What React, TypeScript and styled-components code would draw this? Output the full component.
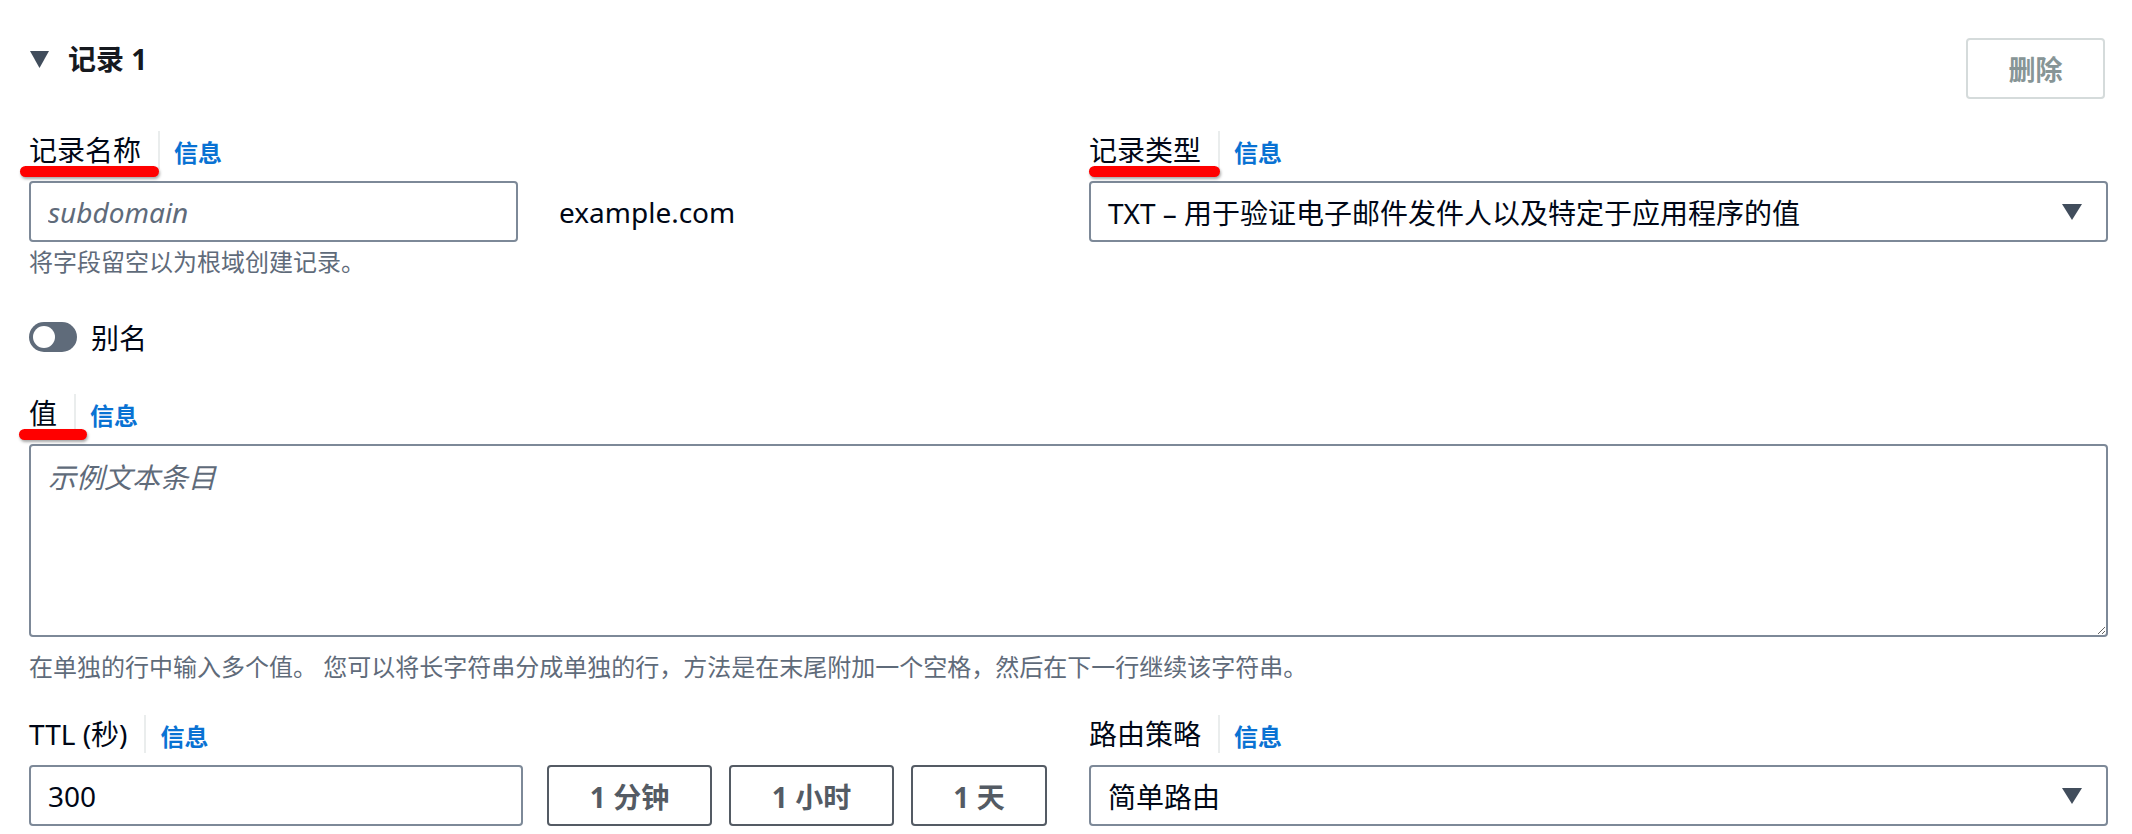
import React from "react";
import styled, { createGlobalStyle } from "styled-components";

const GlobalStyle = createGlobalStyle`
  html, body {
    margin: 0;
    padding: 0;
    background: #ffffff;
  }
  body {
    font-family: "Noto Sans", "Noto Sans CJK SC", sans-serif;
    color: #000716;
  }
  * {
    box-sizing: border-box;
  }
`;

const Page = styled.div`
  padding: 38px 24px 0 29px;
`;

const HeaderRow = styled.div`
  display: flex;
  justify-content: space-between;
  align-items: flex-start;
`;

const Title = styled.h2`
  margin: 0;
  display: flex;
  align-items: center;
  gap: 19px;
  font-size: 28px;
  font-weight: 700;
  line-height: 42px;
  color: #16191f;

  svg {
    margin-left: 1px;
  }
`;

const DeleteButton = styled.button`
  width: 139px;
  height: 61px;
  margin-right: 3px;
  border: 2px solid #d5dbdb;
  border-radius: 4px;
  background: #ffffff;
  color: #879596;
  font-family: inherit;
  font-size: 27px;
  font-weight: 700;
  cursor: default;
`;

const TwoCol = styled.div<{ $top: number }>`
  display: grid;
  grid-template-columns: 1fr 1fr;
  column-gap: 41px;
  margin-top: ${({ $top }) => $top}px;
`;

const Field = styled.div<{ $top?: number }>`
  display: flex;
  flex-direction: column;
  margin-top: ${({ $top }) => $top || 0}px;
`;

const LabelRow = styled.div`
  position: relative;
  display: flex;
  align-items: center;
  height: 40px;
  margin-bottom: 11px;
`;

const Label = styled.span`
  font-size: 28px;
  line-height: 40px;
  color: #000716;
`;

const Divider = styled.span`
  width: 2px;
  height: 38px;
  background: #eaeded;
  margin: 0 14px 0 17px;
`;

const InfoLink = styled.a`
  font-size: 24px;
  font-weight: 700;
  color: #0972d3;
  text-decoration: none;
  margin-top: 3px;
`;

const RedMark = styled.span<{ $left: number; $width: number }>`
  position: absolute;
  top: 36px;
  left: ${({ $left }) => $left}px;
  width: ${({ $width }) => $width}px;
  height: 11px;
  border-radius: 6px;
  background: #ff0000;
  box-shadow: 1px 2px 3px rgba(0, 0, 0, 0.35);
`;

const ControlRow = styled.div`
  display: flex;
  align-items: center;
`;

const TextInput = styled.input<{ $width: number }>`
  width: ${({ $width }) => $width}px;
  height: 61px;
  border: 2px solid #7d8998;
  border-radius: 4px;
  padding: 0 17px;
  font-family: inherit;
  font-size: 28px;
  color: #000716;
  outline: none;

  &::placeholder {
    font-style: italic;
    color: #5f6b7a;
  }
`;

const Suffix = styled.span`
  margin-left: 41px;
  font-size: 28px;
  color: #000716;
`;

const Help = styled.div<{ $top: number }>`
  margin-top: ${({ $top }) => $top}px;
  font-size: 24px;
  line-height: 32px;
  color: #5f6b7a;
`;

const SelectBox = styled.div`
  display: flex;
  align-items: center;
  justify-content: space-between;
  height: 61px;
  border: 2px solid #7d8998;
  border-radius: 4px;
  padding: 0 24px 0 17px;
  font-size: 28px;
  color: #000716;
  white-space: nowrap;
`;

const ToggleRow = styled.div`
  display: flex;
  align-items: center;
  gap: 14px;
  height: 40px;
  margin-top: 39px;
  font-size: 28px;
`;

const ToggleTrack = styled.span`
  position: relative;
  width: 48px;
  height: 30px;
  border-radius: 15px;
  background: #5f6b7a;
`;

const ToggleKnob = styled.span`
  position: absolute;
  top: 4px;
  left: 4px;
  width: 22px;
  height: 22px;
  border-radius: 50%;
  background: #ffffff;
`;

const TextArea = styled.textarea`
  display: block;
  width: 100%;
  height: 193px;
  border: 2px solid #7d8998;
  border-radius: 4px;
  padding: 11px 17px;
  font-family: inherit;
  font-size: 28px;
  line-height: 40px;
  color: #000716;
  resize: vertical;
  outline: none;

  &::placeholder {
    font-style: italic;
    color: #5f6b7a;
  }
`;

const QuickGroup = styled.div`
  display: flex;
  gap: 17px;
  margin-left: 24px;
`;

const QuickButton = styled.button<{ $width: number }>`
  width: ${({ $width }) => $width}px;
  height: 61px;
  border: 2px solid #545b64;
  border-radius: 4px;
  background: #ffffff;
  color: #545b64;
  font-family: inherit;
  font-size: 28px;
  font-weight: 700;
`;

const Caret = ({ w, h }: { w: number; h: number }) => (
  <svg width={w} height={h} viewBox={`0 0 ${w} ${h}`}>
    <polygon points={`0,0 ${w},0 ${w / 2},${h}`} fill="#414d5c" />
  </svg>
);

const quickTimes = [
  { text: "1 分钟", width: 165 },
  { text: "1 小时", width: 165 },
  { text: "1 天", width: 136 },
];

const App = () => {
  return (
    <Page>
      <GlobalStyle />
      <HeaderRow>
        <Title>
          <Caret w={19} h={17} />
          记录 1
        </Title>
        <DeleteButton>删除</DeleteButton>
      </HeaderRow>

      <TwoCol $top={31}>
        <Field>
          <LabelRow>
            <Label>记录名称</Label>
            <Divider />
            <InfoLink>信息</InfoLink>
            <RedMark $left={-9} $width={139} />
          </LabelRow>
          <ControlRow>
            <TextInput $width={489} placeholder="subdomain" />
            <Suffix>example.com</Suffix>
          </ControlRow>
          <Help $top={4}>将字段留空以为根域创建记录。</Help>
        </Field>
        <Field>
          <LabelRow>
            <Label>记录类型</Label>
            <Divider />
            <InfoLink>信息</InfoLink>
            <RedMark $left={0} $width={131} />
          </LabelRow>
          <SelectBox>
            <span>TXT – 用于验证电子邮件发件人以及特定于应用程序的值</span>
            <Caret w={20} h={16} />
          </SelectBox>
        </Field>
      </TwoCol>

      <ToggleRow>
        <ToggleTrack>
          <ToggleKnob />
        </ToggleTrack>
        别名
      </ToggleRow>

      <Field $top={36}>
        <LabelRow>
          <Label>值</Label>
          <Divider />
          <InfoLink>信息</InfoLink>
          <RedMark $left={-10} $width={68} />
        </LabelRow>
        <TextArea placeholder="示例文本条目" />
        <Help $top={14}>
          在单独的行中输入多个值。 您可以将长字符串分成单独的行，方法是在末尾附加一个空格，然后在下一行继续该字符串。
        </Help>
      </Field>

      <TwoCol $top={31}>
        <Field>
          <LabelRow>
            <Label>TTL (秒)</Label>
            <Divider />
            <InfoLink>信息</InfoLink>
          </LabelRow>
          <ControlRow>
            <TextInput $width={494} defaultValue="300" />
            <QuickGroup>
              {quickTimes.map((q) => (
                <QuickButton key={q.text} $width={q.width}>
                  {q.text}
                </QuickButton>
              ))}
            </QuickGroup>
          </ControlRow>
        </Field>
        <Field>
          <LabelRow>
            <Label>路由策略</Label>
            <Divider />
            <InfoLink>信息</InfoLink>
          </LabelRow>
          <SelectBox>
            <span>简单路由</span>
            <Caret w={20} h={16} />
          </SelectBox>
        </Field>
      </TwoCol>
    </Page>
  );
};

export default App;
